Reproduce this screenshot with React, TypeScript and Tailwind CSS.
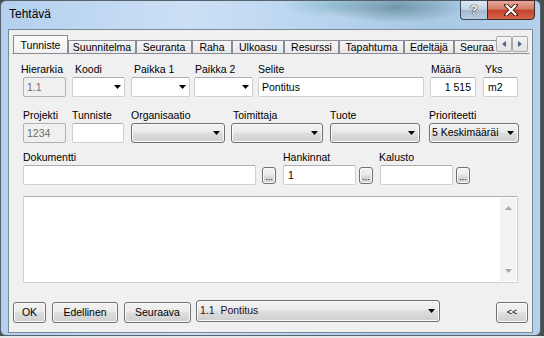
import type { ReactNode } from "react";

const btnFace =
  "bg-[image:linear-gradient(#f2f2f2,#ebebeb_45%,#dddddd_52%,#cfcfcf)] shadow-[inset_0_0_0_1px_#fbfbfb]";
const boxEdge = "rounded-[2px] border border-[#cdd0d6] border-t-[#abadb3]";

function Arrow() {
  return (
    <svg width="7" height="4" viewBox="0 0 7 4" className="shrink-0">
      <path d="M0 0h7L3.5 4z" fill="#000" />
    </svg>
  );
}

function Field({ label, labelShift = 0, className, children }: { label: string; labelShift?: number; className?: string; children: ReactNode }) {
  return (
    <div className={`flex flex-col ${className ?? ""}`}>
      <span className="mb-px h-[13px] whitespace-nowrap leading-[13px]" style={{ marginLeft: labelShift }}>
        {label}
      </span>
      {children}
    </div>
  );
}

function TextBox({ value, disabled, right, className }: { value?: string; disabled?: boolean; right?: boolean; className?: string }) {
  return (
    <div
      className={`flex h-[20px] items-center px-[3px] leading-[18px] ${right ? "justify-end pr-[4px]" : ""} ${
        disabled ? "rounded-[2px] border border-[#adb2b5] bg-[#f0f0f0] text-[#6d6d6d]" : `${boxEdge} bg-white`
      } ${className ?? ""}`}
    >
      {value}
    </div>
  );
}

function DropList({ className }: { className?: string }) {
  return (
    <div className={`flex h-[20px] items-center justify-end bg-white pr-[3px] ${boxEdge} ${className ?? ""}`}>
      <Arrow />
    </div>
  );
}

function Combo({ value, className }: { value?: string; className?: string }) {
  return (
    <div className={`flex h-[20px] items-center rounded-[3px] border border-[#707070] pl-[2px] pr-[4px] ${btnFace} ${className ?? ""}`}>
      <span className="mr-[6px] min-w-0 flex-1 whitespace-pre">{value}</span>
      <Arrow />
    </div>
  );
}

function Dots({ className }: { className?: string }) {
  return (
    <div className={`mt-[2px] flex h-[17px] w-[14px] items-end justify-center rounded-[3px] border border-[#707070] pb-px text-[9px] leading-[9px] ${btnFace} ${className ?? ""}`}>
      ...
    </div>
  );
}

function Button({ label, className }: { label: string; className?: string }) {
  return (
    <div className={`mt-[2px] flex h-[21px] items-center justify-center rounded-[3px] border border-[#707070] ${btnFace} ${className ?? ""}`}>
      {label}
    </div>
  );
}

const tabs: [string, number][] = [
  ["Suunnitelma", 68],
  ["Seuranta", 56],
  ["Raha", 40],
  ["Ulkoasu", 52],
  ["Resurssi", 55],
  ["Tapahtuma", 65],
  ["Edeltäjä", 50],
];

export default function App() {
  return (
    <div className="h-[338px] w-[544px] overflow-hidden bg-[image:linear-gradient(to_bottom,#465050_336px,#e9e9e9_336px)] font-['Liberation_Sans',Arial,sans-serif] text-[10.5px] text-black">
      <div className="h-[336px] w-[541px] rounded-[6px] border border-[#56626e] bg-[image:radial-gradient(ellipse_70px_16px_at_395px_6px,rgba(52,96,104,0.5),transparent),radial-gradient(ellipse_50px_12px_at_330px_4px,rgba(110,170,175,0.45),transparent),linear-gradient(90deg,#b4d0ee,#cbe0f5_35%,#bcd6f0_55%,#a8c8e4_80%,#b4d0ea)]">
        <div className="flex h-[28px] items-start">
          <span className="pl-[8px] pt-[6px] text-[12px] leading-[15px]">Tehtävä</span>
          <div className="ml-auto mr-[5px] -mt-px flex">
            <div className="flex h-[20px] w-[27px] items-center justify-center rounded-bl-[4px] border border-r-0 border-[#3e4c5c] bg-[image:linear-gradient(#dde8f2,#bfd0e1_50%,#a3b9cf_52%,#b8cde0)] text-[13px] font-bold text-white [text-shadow:0_0_1px_#000,0_0_1px_#000]">
              ?
            </div>
            <div className="flex h-[20px] w-[48px] items-center justify-center rounded-br-[4px] border border-[#3e2a26] bg-[image:linear-gradient(#e8aa9c,#d47a66_45%,#c3432a_52%,#d4664c)]">
              <svg width="14" height="12" viewBox="0 0 14 12">
                <path d="M2 1l10 10M12 1L2 11" stroke="#4a1d14" strokeWidth="4" strokeLinecap="round" />
                <path d="M2.5 1.5l9 9M11.5 1.5l-9 9" stroke="#fff" strokeWidth="2.2" strokeLinecap="round" />
              </svg>
            </div>
          </div>
        </div>

        <div className="ml-[7px] h-[304px] w-[525px] border border-[#7b8a99] bg-[#f0f0f0]">
          <div className="ml-[3px] mt-[5px] w-[518px]">
            <div className="flex h-[18px] items-end">
              <div className="ml-px flex h-full w-[483px] items-end overflow-hidden">
                <div className="relative z-10 -mb-px h-[19px] w-[55px] shrink-0 border border-b-0 border-[#898c95] bg-[image:linear-gradient(#fcfcfc,#f0f0f0)] pt-[3px] text-center leading-[13px]">
                  Tunniste
                </div>
                {tabs.map(([t, w]) => (
                  <div
                    key={t}
                    className="h-[13px] shrink-0 border border-b-0 border-[#898c95] bg-[image:linear-gradient(#f4f4f4,#e8e8e8)] text-center leading-[12px]"
                    style={{ width: w }}
                  >
                    {t}
                  </div>
                ))}
                <div className="h-[13px] w-[60px] shrink-0 border border-b-0 border-[#898c95] bg-[image:linear-gradient(#f4f4f4,#e8e8e8)] pl-[5px] leading-[12px]">
                  Seuraa
                </div>
              </div>
              <div className="mb-px flex self-start pt-px">
                {["M4 0v6L0 3z", "M0 0v6l4-3z"].map((d) => (
                  <div key={d} className="flex h-[16px] w-[16px] items-center justify-center rounded-[2px] border border-[#a9a9a9] bg-[image:linear-gradient(#f4f4f4,#e2e2e2)]">
                    <svg width="4" height="6" viewBox="0 0 4 6">
                      <path d={d} fill="#4b6287" />
                    </svg>
                  </div>
                ))}
              </div>
            </div>

            <div className="h-[239px] w-[518px] border border-transparent border-t-[#898c95] pl-[10px] pt-[9px]">
              <div className="flex items-start">
                <Field label="Hierarkia" labelShift={-2} className="w-[43px]">
                  <TextBox value="1.1" disabled />
                </Field>
                <Field label="Koodi" labelShift={3} className="ml-[6px] w-[53px]">
                  <DropList />
                </Field>
                <Field label="Paikka 1" labelShift={3} className="ml-[6px] w-[59px]">
                  <DropList />
                </Field>
                <Field label="Paikka 2" labelShift={1} className="ml-[4px] w-[59px]">
                  <DropList />
                </Field>
                <Field label="Selite" className="ml-[5px] w-[166px]">
                  <TextBox value="Pontitus" />
                </Field>
                <Field label="Määrä" labelShift={1} className="ml-[6px] w-[46px]">
                  <TextBox value="1 515" right />
                </Field>
                <Field label="Yks" labelShift={2} className="ml-[7px] w-[35px]">
                  <TextBox value="m2" className="pl-[4px]" />
                </Field>
              </div>

              <div className="mt-[12px] flex items-start">
                <Field label="Projekti" className="w-[43px]">
                  <TextBox value="1234" disabled />
                </Field>
                <Field label="Tunniste" className="ml-[6px] w-[52px]">
                  <TextBox />
                </Field>
                <Field label="Organisaatio" className="ml-[7px] w-[94px]">
                  <Combo />
                </Field>
                <Field label="Toimittaja" labelShift={2} className="ml-[6px] w-[92px]">
                  <Combo />
                </Field>
                <Field label="Tuote" className="ml-[7px] w-[90px]">
                  <Combo />
                </Field>
                <Field label="Prioriteetti" className="ml-[9px] w-[90px]">
                  <Combo value="5 Keskimääräi" />
                </Field>
              </div>

              <div className="mt-[8px] flex items-start">
                <Field label="Dokumentti" className="w-[233px]">
                  <TextBox />
                </Field>
                <Dots className="ml-[6px] mt-[16px]" />
                <Field label="Hankinnat" className="ml-[7px] w-[73px]">
                  <TextBox value="1" className="pl-[4px]" />
                </Field>
                <Dots className="ml-[3px] mt-[16px]" />
                <Field label="Kalusto" labelShift={-1} className="ml-[7px] w-[73px]">
                  <TextBox />
                </Field>
                <Dots className="ml-[3px] mt-[16px]" />
              </div>

              <div className={`mt-[11px] flex h-[87px] w-[495px] justify-end bg-white p-px ${boxEdge}`}>
                <div className="flex w-[16px] flex-col items-center justify-between bg-[#f3f3f3] py-[8px]">
                  <svg width="7" height="4" viewBox="0 0 7 4">
                    <path d="M3.5 0L7 4H0z" fill="#a8a8a8" />
                  </svg>
                  <svg width="7" height="4" viewBox="0 0 7 4">
                    <path d="M0 0h7L3.5 4z" fill="#a8a8a8" />
                  </svg>
                </div>
              </div>
            </div>
          </div>

          <div className="mt-[8px] flex items-start pl-[4px]">
            <Button label="OK" className="w-[33px] border-[#3c7fb1] shadow-[inset_0_0_0_1px_#8fd8f8]" />
            <Button label="Edellinen" className="ml-[6px] w-[66px]" />
            <Button label="Seuraava" className="ml-[6px] w-[67px]" />
            <Combo value="1.1  Pontitus" className="ml-[5px] h-[22px] w-[244px] pl-[3px] text-[#2a0f24]" />
            <Button label="<<" className="ml-auto mr-[4px] w-[32px] text-[9px]" />
          </div>
        </div>
      </div>
    </div>
  );
}
